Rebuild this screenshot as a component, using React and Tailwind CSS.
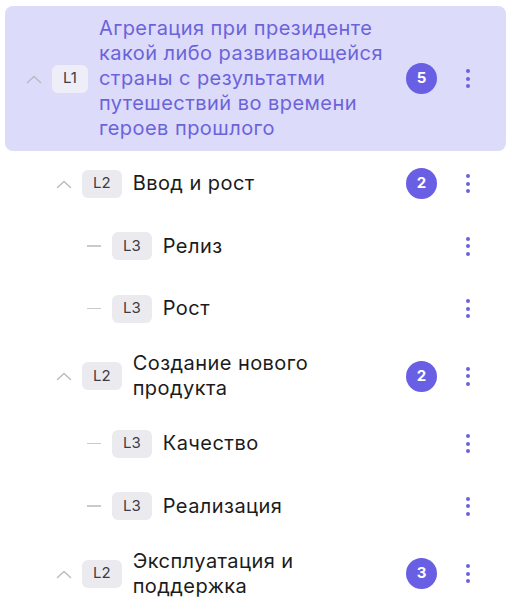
import React from "react";

const items = [
  {
    level: 1,
    title: "Агрегация при президенте какой либо развивающейся страны с результатми путешествий во времени героев прошлого",
    count: 5,
    active: true,
  },
  { level: 2, title: "Ввод и рост", count: 2 },
  { level: 3, title: "Релиз" },
  { level: 3, title: "Рост" },
  { level: 2, title: "Создание нового продукта", count: 2 },
  { level: 3, title: "Качество" },
  { level: 3, title: "Реализация" },
  { level: 2, title: "Эксплуатация и поддержка", count: 3 },
];

const indent = {
  1: "pl-[21px]",
  2: "pl-[51px]",
  3: "pl-[81px]",
};

function Chevron() {
  return (
    <svg width="16" height="10" viewBox="0 0 16 10" fill="none" className="text-[#b9b9c2]">
      <polyline points="1.5,8.5 8,2.5 14.5,8.5" stroke="currentColor" strokeWidth="1.4" strokeLinecap="round" strokeLinejoin="round" />
    </svg>
  );
}

function Kebab() {
  return (
    <button type="button" className="flex h-10 w-10 shrink-0 flex-col items-center justify-center gap-[3.5px]">
      <span className="h-[4px] w-[4px] rounded-full bg-[#6a62dc]" />
      <span className="h-[4px] w-[4px] rounded-full bg-[#6a62dc]" />
      <span className="h-[4px] w-[4px] rounded-full bg-[#6a62dc]" />
    </button>
  );
}

function Row({ item }) {
  return (
    <div
      className={`flex min-h-[60px] items-center py-[10px] pr-[18px] ${indent[item.level]} ${
        item.active ? "rounded-lg bg-[#dcdbfa]" : ""
      }`}
    >
      <div className="flex w-4 shrink-0 items-center justify-center">
        {item.level < 3 ? <Chevron /> : <span className="h-[1.5px] w-[14px] bg-[#c9c9cf]" />}
      </div>
      <span
        className={`ml-[10px] flex h-[28px] shrink-0 items-center rounded-md px-[11px] text-[15px] ${
          item.active ? "bg-[#eeeef8] text-[#3d3d46]" : "bg-[#ebebef] text-[#3d3d46]"
        }`}
      >
        L{item.level}
      </span>
      <p
        className={`ml-[11px] flex-1 text-[20px] leading-[25px] tracking-[0.45px] ${
          item.active ? "text-[#6c63db]" : "text-[#1b1b20]"
        }`}
      >
        {item.title}
      </p>
      {item.count ? (
        <span className="ml-2.5 flex h-[31px] w-[31px] shrink-0 items-center justify-center rounded-full bg-[#695fe4] text-[15px] font-bold text-white">
          {item.count}
        </span>
      ) : null}
      <div className="ml-[11px]">
        <Kebab />
      </div>
    </div>
  );
}

export default function App() {
  return (
    <div className="h-[602px] w-[508px] overflow-hidden bg-white pl-[5px] pr-[2px] pt-[6px] font-['Inter',sans-serif]">
      <div className="flex flex-col gap-[2.5px]">
        {items.map((item, i) => (
          <Row key={i} item={item} />
        ))}
      </div>
    </div>
  );
}
